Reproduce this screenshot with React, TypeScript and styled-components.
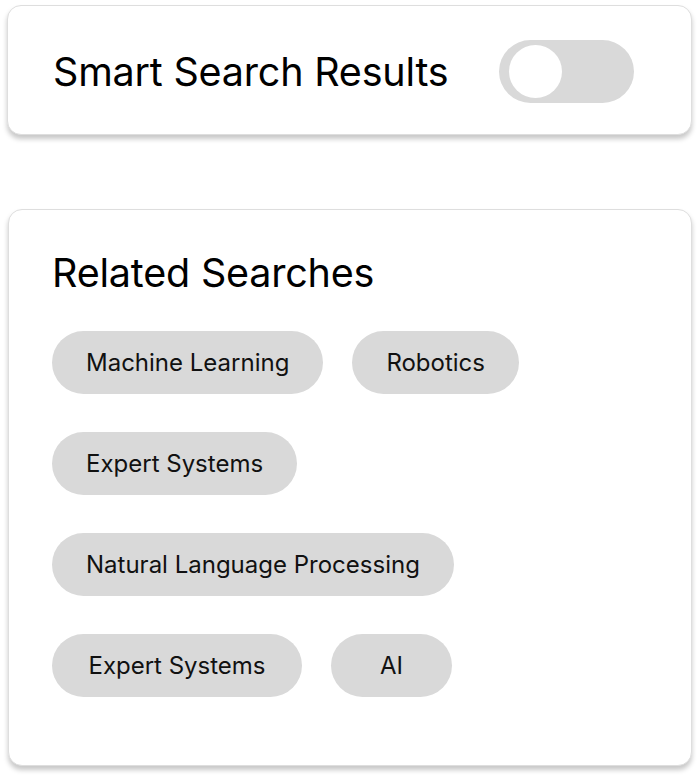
import React from "react";
import styled, { createGlobalStyle } from "styled-components";

const Global = createGlobalStyle`
  html, body { margin: 0; padding: 0; background: #ffffff; }
  body { font-family: Inter, "Noto Sans", sans-serif; color: #111; }
`;

const Page = styled.div`
  display: flex;
  flex-direction: column;
  gap: 74px;
  padding: 5px 8px 10px 7px;
  width: 700px;
  box-sizing: border-box;
`;

const Card = styled.section<{ $inset?: number }>`
  background: #fff;
  border: 1px solid #dedede;
  border-radius: 14px;
  box-shadow: 0 4px 5px rgba(0, 0, 0, 0.22);
  margin-left: ${(p) => p.$inset ?? 0}px;
  box-sizing: border-box;
`;

const ToggleCard = styled(Card)`
  height: 130px;
  display: flex;
  align-items: center;
  gap: 51px;
  padding: 3px 0 0 45px;
`;

const Title = styled.h2`
  margin: 0;
  font-size: 39.5px;
  font-weight: 400;
  letter-spacing: -0.2px;
  color: #000;
`;

const Track = styled.div<{ $on: boolean }>`
  width: 135px;
  height: 63px;
  border-radius: 32px;
  background: ${(p) => (p.$on ? "#4caf50" : "#d9d9d9")};
  display: flex;
  align-items: center;
  padding: 0 10px;
  box-sizing: border-box;
`;

const Knob = styled.div`
  width: 53px;
  height: 53px;
  border-radius: 50%;
  background: #fff;
`;

const RelatedCard = styled(Card)`
  height: 557px;
  padding: 39px 44px 0 43px;
`;

const Chips = styled.div`
  display: flex;
  flex-wrap: wrap;
  column-gap: 29px;
  row-gap: 38px;
  margin-top: 34px;
`;

const Chip = styled.button<{ $minWidth?: number }>`
  height: 63px;
  min-width: ${(p) => p.$minWidth ?? 0}px;
  border: none;
  border-radius: 32px;
  background: #d9d9d9;
  padding: 0 34px;
  font-family: Inter, "Noto Sans", sans-serif;
  font-size: 24px;
  color: #111;
`;

const items: { label: string; minWidth?: number }[] = [
  { label: "Machine Learning" },
  { label: "Robotics" },
  { label: "Expert Systems" },
  { label: "Natural Language Processing" },
  { label: "Expert Systems", minWidth: 250 },
  { label: "AI", minWidth: 121 },
];

export default function App() {
  return (
    <>
      <Global />
      <Page>
        <ToggleCard>
          <Title>Smart Search Results</Title>
          <Track $on={false}>
            <Knob />
          </Track>
        </ToggleCard>
        <RelatedCard $inset={1}>
          <Title>Related Searches</Title>
          <Chips>
            {items.map((t, i) => (
              <Chip key={i} $minWidth={t.minWidth}>
                {t.label}
              </Chip>
            ))}
          </Chips>
        </RelatedCard>
      </Page>
    </>
  );
}
